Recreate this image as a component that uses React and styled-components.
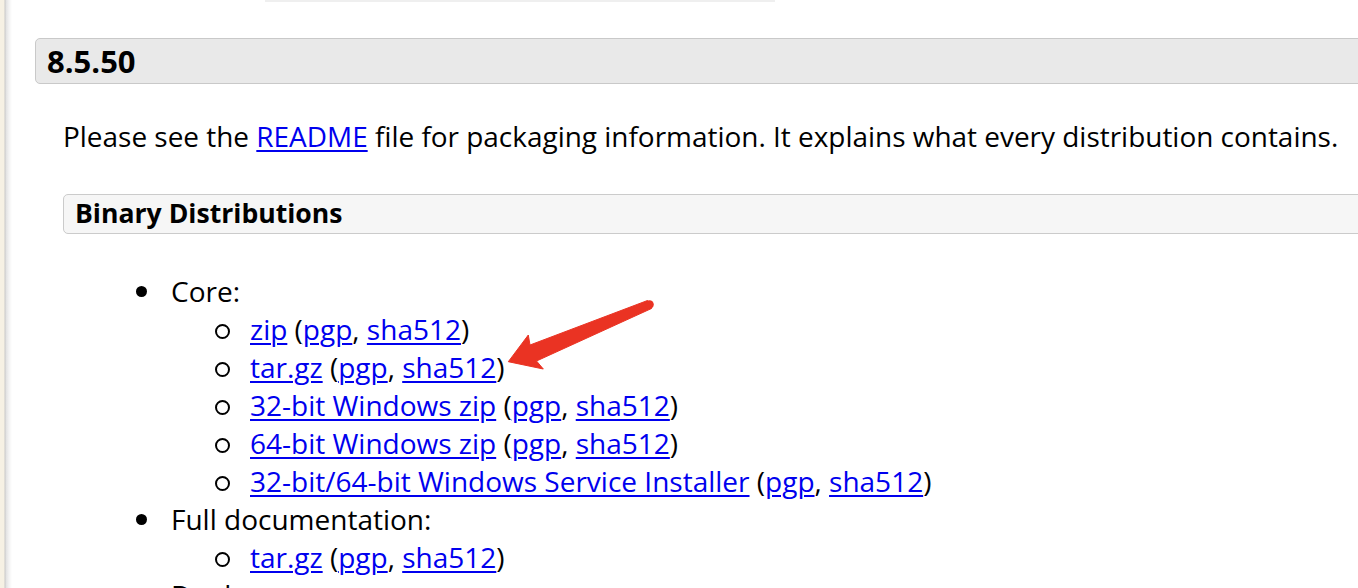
import React from "react";
import styled, { createGlobalStyle } from "styled-components";

const Global = createGlobalStyle`
  html, body { margin: 0; padding: 0; background: #fff; }
  body { font-family: "Open Sans", "Noto Sans", "DejaVu Sans", sans-serif; color: #000; overflow: hidden; }
  * { box-sizing: border-box; }
`;

const Page = styled.div`
  position: relative;
  display: flex;
  width: 1358px;
  height: 588px;
  overflow: hidden;
`;

const Strip = styled.div`
  flex: 0 0 12px;
  background: linear-gradient(to right, #f6f1e4 0, #f6f1e4 4px, #c9c9c9 5px, #e2e2e2 6px, #f3f3f3 9px, #ffffff 12px);
`;

const Main = styled.div`
  flex: 1;
  padding-left: 23px;
  margin-right: -40px;
`;

const TopRule = styled.div`
  height: 2px;
  width: 510px;
  margin-left: 230px;
  background: #efefef;
`;

const H1Box = styled.h2`
  margin: 36px 0 0 0;
  padding: 0 11px;
  height: 46px;
  border: 1px solid #c9c9c9;
  border-radius: 5px;
  background: #e9e9e9;
  font-size: 31px;
  line-height: 44px;
  font-weight: 700;
`;

const Section = styled.div`
  padding-left: 28px;
`;

const Para = styled.p`
  margin: 33px 0 0 0;
  font-size: 27.95px;
  line-height: 38px;
  white-space: nowrap;
`;

const H2Box = styled.h3`
  margin: 39px 0 0 0;
  padding: 0 11px;
  height: 40px;
  border: 1px solid #cbcbcb;
  border-radius: 5px;
  background: #f6f6f6;
  font-size: 26.6px;
  line-height: 37px;
  font-weight: 700;
`;

const List = styled.ul`
  list-style: none;
  margin: ${(p) => (p.$nested ? "0" : "38px 0 0 0")};
  padding: 0 0 0 ${(p) => (p.$nested ? "79px" : "108px")};
  font-size: 28px;
  line-height: 38px;
  white-space: nowrap;
`;

const Item = styled.li`
  position: relative;
  &::before {
    content: "";
    position: absolute;
    top: 14px;
    left: -35px;
    width: 11px;
    height: 11px;
    border-radius: 50%;
    background: ${(p) => (p.$circle ? "transparent" : "#000")};
    border: ${(p) => (p.$circle ? "2px solid #000" : "none")};
  }
`;

const A = styled.a`
  color: #0000ee;
  text-decoration: underline;
  text-underline-offset: 3px;
  text-decoration-thickness: 1.5px;
`;

const Arrow = styled.svg`
  position: absolute;
  left: 495px;
  top: 290px;
  width: 170px;
  height: 90px;
  pointer-events: none;
`;

function Dl({ name }) {
  return (
    <Item $circle>
      <A href="#">{name}</A> (<A href="#">pgp</A>, <A href="#">sha512</A>)
    </Item>
  );
}

export default function App() {
  return (
    <>
      <Global />
      <Page>
        <Strip />
        <Main>
          <TopRule />
          <H1Box>8.5.50</H1Box>
          <Section>
            <Para>
              Please see the <A href="#">README</A> file for packaging information. It explains what every distribution contains.
            </Para>
            <H2Box>Binary Distributions</H2Box>
            <List>
              <Item>
                Core:
                <List $nested>
                  <Dl name="zip" />
                  <Dl name="tar.gz" />
                  <Dl name="32-bit Windows zip" />
                  <Dl name="64-bit Windows zip" />
                  <Dl name="32-bit/64-bit Windows Service Installer" />
                </List>
              </Item>
              <Item>
                Full documentation:
                <List $nested>
                  <Dl name="tar.gz" />
                </List>
              </Item>
              <Item>Deployer:</Item>
            </List>
          </Section>
        </Main>
        <Arrow viewBox="495 290 170 90">
          <path
            d="M 651.5 308.5 L 536.5 361 L 543.3 369 L 508.3 361.7 L 528.3 335 L 530 345 L 647.5 300.5 Z"
            fill="#ea3323"
            stroke="#ea3323"
            strokeWidth="1"
            strokeLinejoin="round"
          />
          <circle cx="649.5" cy="304.5" r="4.3" fill="#ea3323" />
        </Arrow>
      </Page>
    </>
  );
}
